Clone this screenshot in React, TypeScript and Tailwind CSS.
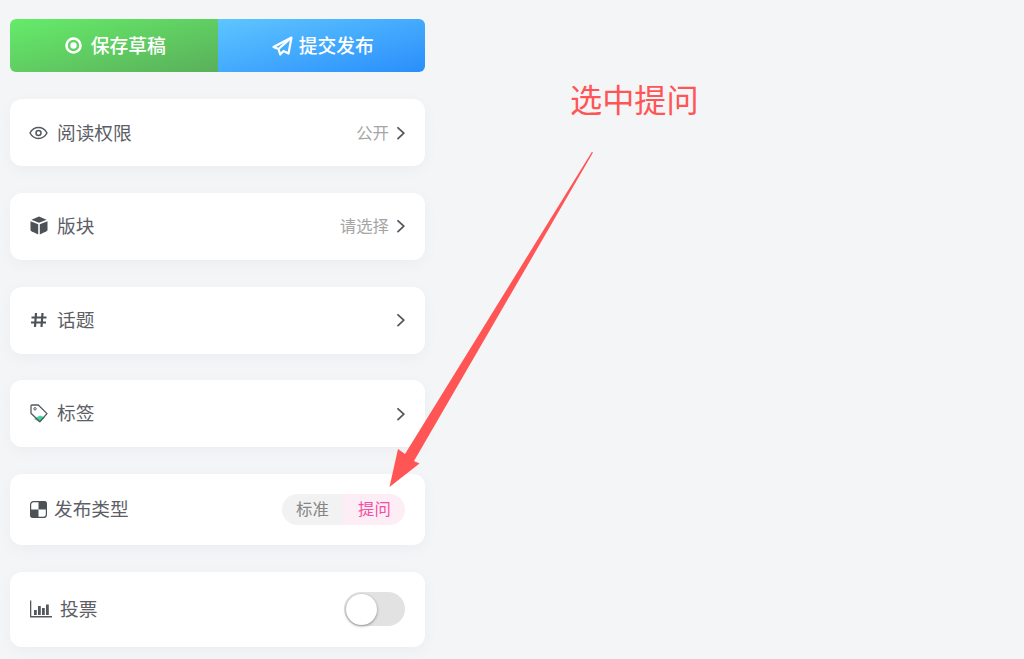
import React from "react";

const Chevron = () => (
  <svg width="10" height="14" viewBox="0 0 10 14" fill="none" className="ml-[6px] shrink-0">
    <path d="M3 1.800 8.800 7.200 3 12.600" stroke="#55595e" strokeWidth="1.800" strokeLinecap="round" strokeLinejoin="round" />
  </svg>
);

const EyeIcon = () => (
  <svg width="19" height="14" viewBox="0 0 19 14" fill="none" className="-ml-[1px]">
    <path d="M1 7C3 3.400 6 1.600 9.500 1.600S16 3.400 18 7c-2 3.600-5 5.400-8.500 5.400S3 10.600 1 7Z" stroke="#55595e" strokeWidth="1.500" strokeLinejoin="round" />
    <circle cx="9.500" cy="7" r="2.500" stroke="#55595e" strokeWidth="1.500" />
  </svg>
);

const CubeIcon = () => (
  <svg width="18" height="19" viewBox="0 0 18 19" fill="#4d5257" className="mb-[2px]">
    <path d="M9 .6 16.600 3.700 9 6.800 1.400 3.700Z" />
    <path d="M.5 5.200 8.200 8.300V18.400L1.500 15.300C.9 15 .5 14.500.5 13.800Z" />
    <path d="M17.500 5.200 9.800 8.300V18.400L16.500 15.300C17.100 15 17.500 14.500 17.500 13.800Z" />
  </svg>
);

const HashIcon = () => (
  <svg width="18" height="16" viewBox="0 0 18 16" fill="none" stroke="#4d5257" strokeWidth="2.200" className="mb-[1px]">
    <path d="M6 1 5 15M12.500 1 11.500 15M1.500 5.500H16.500M1 10.500H16" />
  </svg>
);

const TagIcon = () => (
  <svg width="18" height="19" viewBox="0 0 18 19" fill="none">
    <path d="M4 15 9.500 18 15 13.500 10 11.500Z" fill="#3ed69a" />
    <path d="M1.800 1H8.300L17 9.600 9.800 17.800 1 9.300V1.800Z" stroke="#55595e" strokeWidth="1.300" strokeLinejoin="round" />
    <circle cx="5" cy="4.800" r="1.200" stroke="#55595e" strokeWidth="1" />
  </svg>
);

const CheckerIcon = () => (
  <svg width="17" height="17" viewBox="0 0 17 17" fill="none">
    <rect x=".6" y=".6" width="15.800" height="15.800" rx="3" stroke="#4d5257" strokeWidth="1.200" />
    <path d="M8.500 0H14a3 3 0 0 1 3 3V8.500H8.500Z" fill="#4d5257" />
    <path d="M0 8.500H8.500V17H3a3 3 0 0 1-3-3Z" fill="#4d5257" />
  </svg>
);

const BarsIcon = () => (
  <svg width="22" height="18" viewBox="0 0 22 18" fill="#55595e">
    <path d="M0 .5H1.300V16.100H22V17.400H0Z" />
    <rect x="4" y="10" width="2.800" height="5" />
    <rect x="8" y="6" width="2.800" height="9" />
    <rect x="12" y="8" width="2.800" height="7" />
    <rect x="16" y="4.500" width="2.800" height="10.500" />
  </svg>
);

function Row({
  icon,
  label,
  gap,
  height,
  children,
}: {
  icon: React.ReactNode;
  label: string;
  gap: string;
  height: string;
  children?: React.ReactNode;
}) {
  return (
    <div className={`flex items-center justify-between rounded-xl bg-white pl-5 pr-5 shadow-[0_4px_16px_rgba(30,40,60,0.035)] ${height}`}>
      <div className={`flex items-center ${gap}`}>
        {icon}
        <span className="mb-[2px] text-[18.700px] leading-none text-[#5c6066]">{label}</span>
      </div>
      {children}
    </div>
  );
}

export default function App() {
  return (
    <div className="relative h-[659px] w-[1024px] overflow-hidden bg-[#f4f5f7] pl-[10px] pt-[19px] font-['Noto_Sans_CJK_SC',sans-serif]">
      <div className="flex w-[415px] flex-col gap-[26.700px]">
        <div className="flex h-[53.300px] overflow-hidden rounded-md text-white">
          <button className="flex w-[207.700px] items-center justify-center gap-[9px] bg-gradient-to-br from-[#65ec6a] to-[#5ab05a] pb-[2px] pl-[3px] text-[18.800px] font-medium">
            <svg width="17" height="17" viewBox="0 0 17 17" fill="none" className="mt-[2px]">
              <circle cx="8.500" cy="8.500" r="7" stroke="white" strokeWidth="2.600" />
              <circle cx="8.500" cy="8.500" r="3.200" fill="white" />
            </svg>
            保存草稿
          </button>
          <button className="flex flex-1 items-center justify-center gap-[6px] bg-gradient-to-br from-[#5ec5ff] to-[#2a8efb] pb-[2px] pl-[3px] text-[18.800px] font-medium">
            <svg width="21" height="20" viewBox="0 0 21 20" fill="none" stroke="white" strokeWidth="2.200" strokeLinejoin="round" className="mt-[2px]">
              <path d="M19.500 1.500 1.500 11 6.500 13 8.200 18.500 11.500 15 16.500 17.500Z" />
              <path d="M19.500 1.500 6.500 13" />
            </svg>
            提交发布
          </button>
        </div>

        <Row icon={<EyeIcon />} label="阅读权限" gap="gap-[9px]" height="h-[67.200px] mt-[0.300px]">
          <div className="flex items-center text-[16.400px] text-[#a5a5a6]">
            <span className="mb-[2px]">公开</span>
            <Chevron />
          </div>
        </Row>
        <Row icon={<CubeIcon />} label="版块" gap="gap-[9px]" height="h-[66.700px]">
          <div className="flex items-center text-[16.400px] text-[#a5a5a6]">
            <span className="mb-[3px]">请选择</span>
            <Chevron />
          </div>
        </Row>
        <Row icon={<HashIcon />} label="话题" gap="gap-[9px]" height="h-[67px]">
          <Chevron />
        </Row>
        <Row icon={<TagIcon />} label="标签" gap="gap-[9px]" height="h-[66.700px]">
          <Chevron />
        </Row>
        <Row icon={<CheckerIcon />} label="发布类型" gap="gap-[7px]" height="h-[71.700px]">
          <div className="flex h-[30.400px] w-[123px] overflow-hidden rounded-full text-[16.400px] leading-none">
            <span className="flex w-[61px] items-center justify-center bg-[#f2f2f2] pb-[2px] text-[#858585]">标准</span>
            <span className="flex flex-1 items-center justify-center bg-[#fdeef6] pb-[2px] pl-[1px] text-[#f64ea2]">提问</span>
          </div>
        </Row>
        <Row icon={<BarsIcon />} label="投票" gap="gap-[8px]" height="h-[74.700px]">
          <div className="h-[34px] w-[61px] rounded-full bg-[#e2e2e2] p-[1.500px]">
            <div className="size-[31px] rounded-full bg-white shadow-[0_1px_3px_rgba(0,0,0,0.4)]" />
          </div>
        </Row>
      </div>

      <span className="absolute left-[570px] top-[75px] text-[32.200px] leading-[46px] text-[#ff5555]">选中提问</span>
      <svg width="1024" height="659" viewBox="0 0 1024 659" className="pointer-events-none absolute left-0 top-0">
        <path d="M593 152.500 414 461 419.500 463.500 389.500 487 398 449 405 454 591.800 152Z" fill="#ff5555" />
      </svg>
    </div>
  );
}
